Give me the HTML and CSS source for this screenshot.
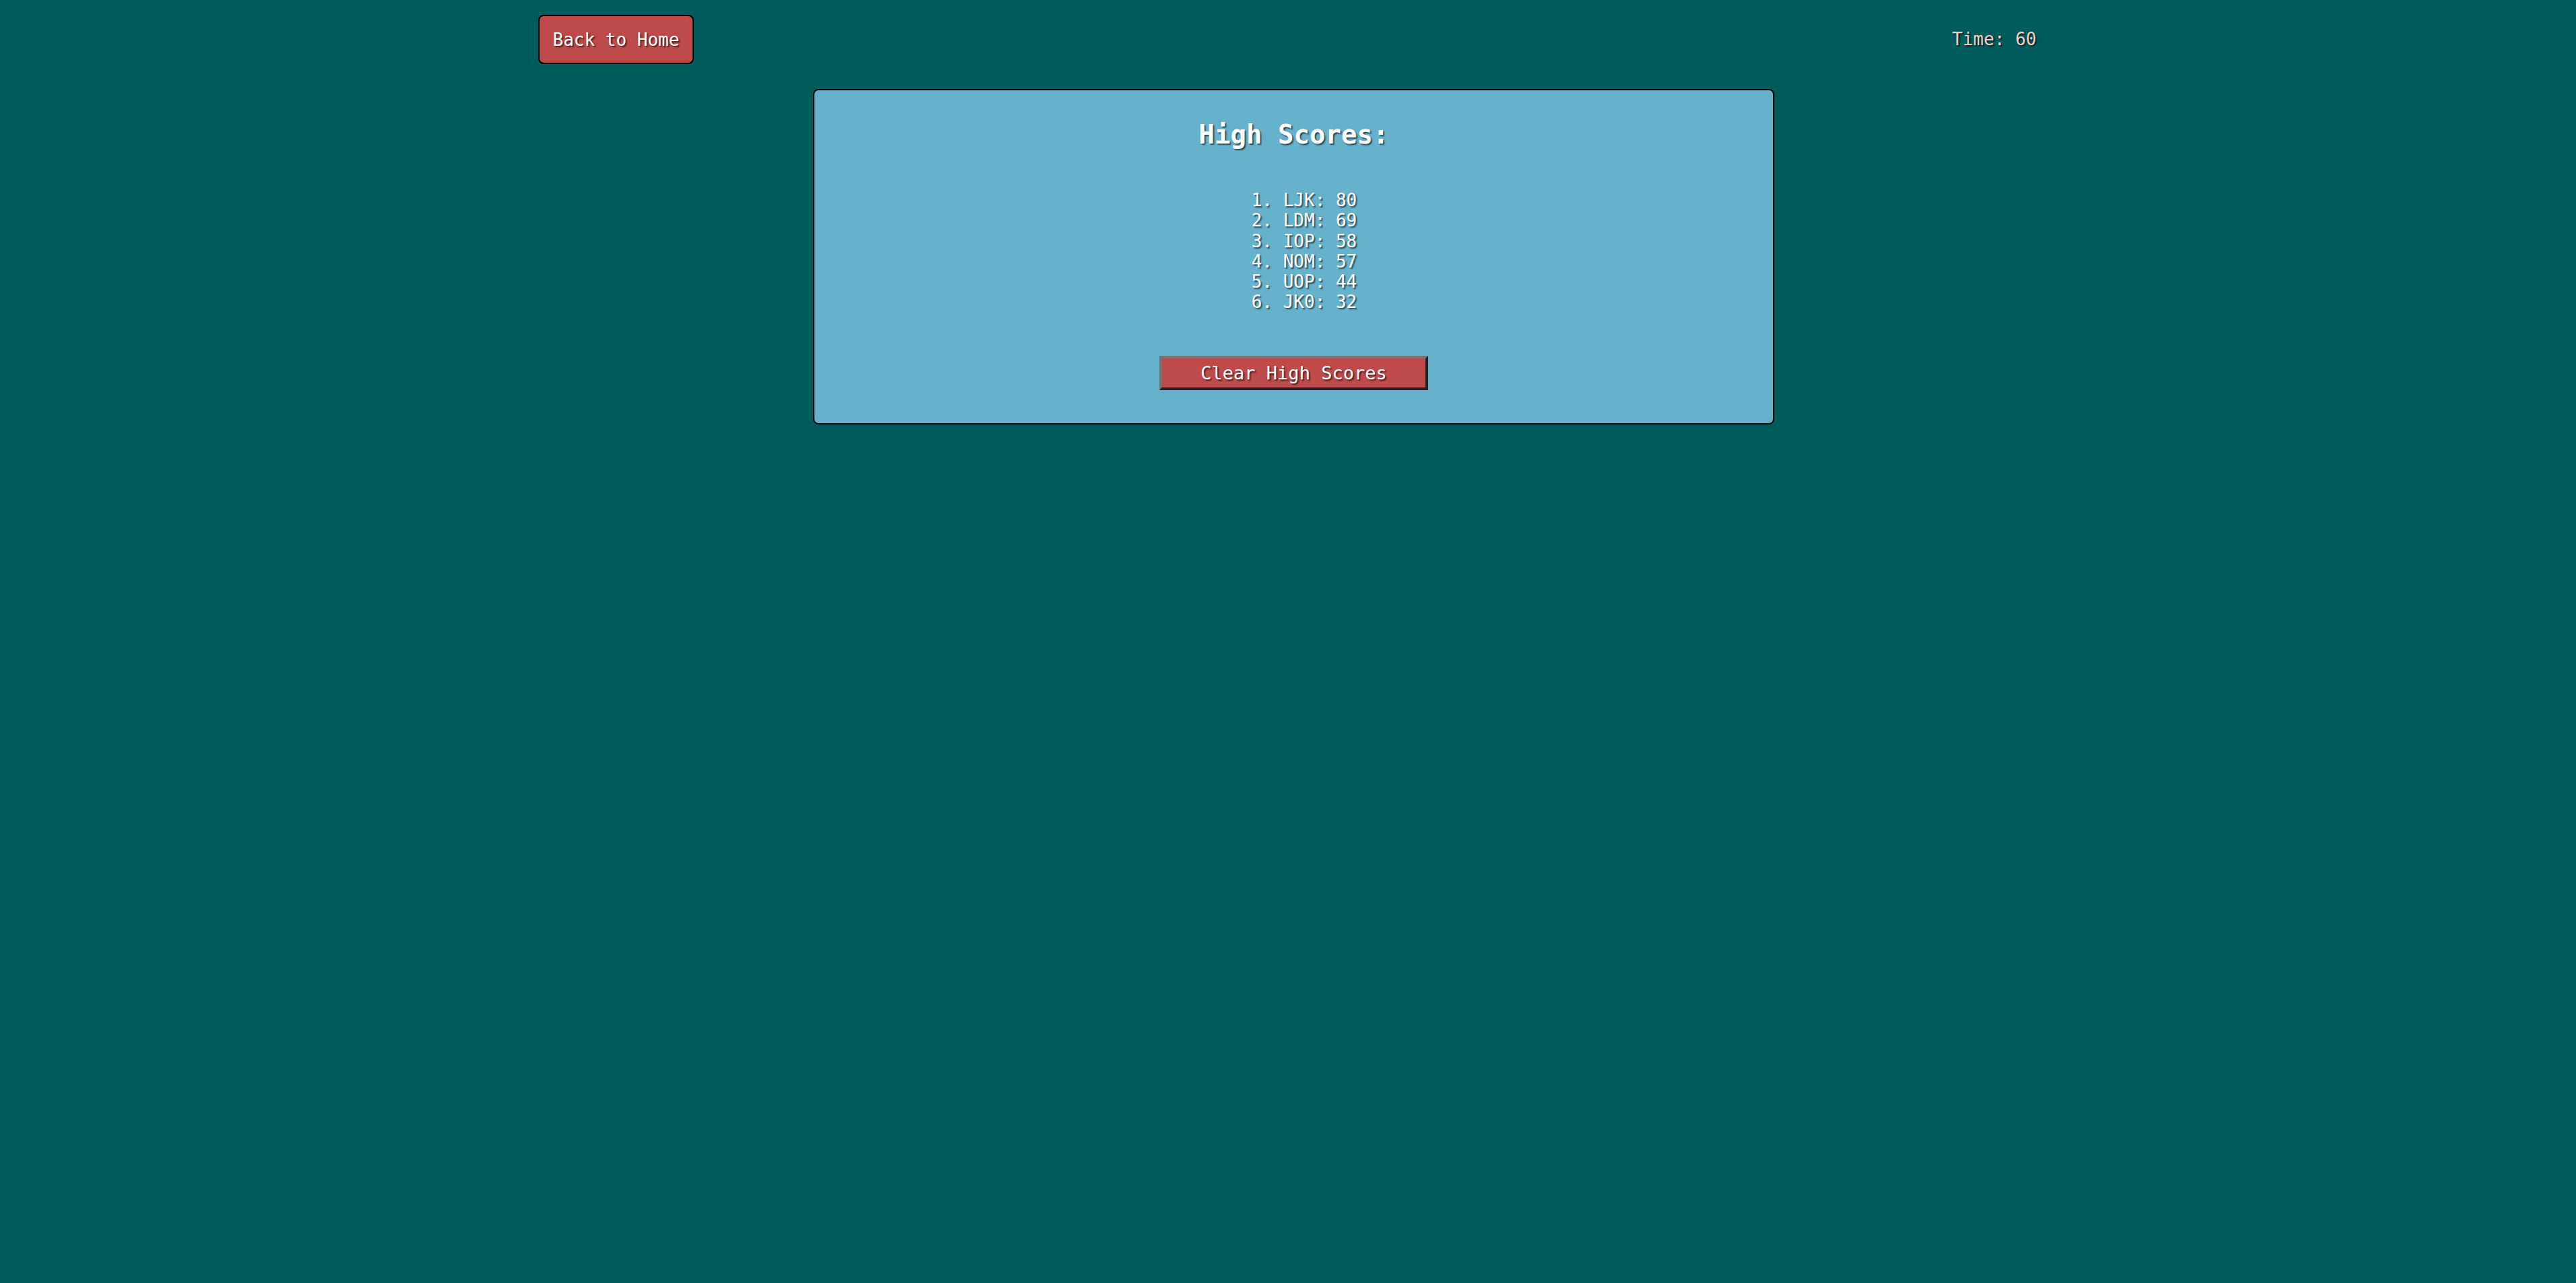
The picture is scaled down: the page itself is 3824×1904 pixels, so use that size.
FILE: index.html
```html
<!DOCTYPE html>
<html>
<head>
<meta charset="utf-8">
<link rel="stylesheet" href="styles.css">
</head>
<body>
<header class="top-bar">
  <button class="home-btn">Back to Home</button>
  <div class="timer">Time: 60</div>
</header>
<main class="main">
  <section class="card">
    <h2 class="card-title">High Scores:</h2>
    <ol class="scores">
      <li>1. LJK: 80</li>
      <li>2. LDM: 69</li>
      <li>3. IOP: 58</li>
      <li>4. NOM: 57</li>
      <li>5. UOP: 44</li>
      <li>6. JK0: 32</li>
    </ol>
    <button class="clear-btn">Clear High Scores</button>
  </section>
</main>
</body>
</html>
```
FILE: styles.css
```css
html, body {
  background: #005c5a;
}
body {
  margin: 8px;
  font-family: "DejaVu Sans Mono", monospace;
  font-size: 26px;
  color: #ffffff;
}
.top-bar {
  width: 2226px;
  margin: 14px auto 0;
  display: flex;
  justify-content: space-between;
  align-items: flex-start;
}
.home-btn {
  font-family: "DejaVu Sans Mono", monospace;
  font-size: 26px;
  line-height: 30px;
  color: #ffffff;
  background: #bf4a4a;
  border: 2px solid #000;
  border-radius: 8px;
  padding: 20px 19.5px 19px;
  text-shadow: 2px 2px 2px rgba(0, 0, 0, 0.6);
}
.timer {
  color: #f9cccc;
  line-height: 30px;
  margin-top: 21px;
  margin-right: 2px;
  text-shadow: 2px 2px 2px rgba(0, 0, 0, 0.6);
}
.main {
  display: flex;
  flex-direction: column;
  align-items: center;
  margin-top: 37px;
}
.card {
  width: 1423px;
  margin-left: 17px;
  background: #66b2cd;
  border: 2px solid #000;
  border-radius: 8px;
  display: flex;
  flex-direction: column;
  align-items: center;
  padding: 43px 0 49px;
  box-sizing: content-box;
}
.card-title {
  margin: 0;
  font-size: 39px;
  font-weight: bold;
  line-height: 45px;
  text-shadow: 2px 2px 2px rgba(0, 0, 0, 0.6);
}
.scores {
  list-style: none;
  margin: 60px 0 0;
  padding: 0 0 0 31px;
  line-height: 30.3px;
  text-shadow: 2px 2px 2px rgba(0, 0, 0, 0.6);
}
.clear-btn {
  margin-top: 64px;
  width: 399px;
  height: 51px;
  font-family: "DejaVu Sans Mono", monospace;
  font-size: 27px;
  line-height: 31px;
  color: #ffffff;
  background: #bf4a4a;
  border-width: 4px;
  border-style: solid;
  border-color: #757575 #222222 #222222 #757575;
  padding: 0;
  text-shadow: 2px 2px 2px rgba(0, 0, 0, 0.6);
}
```
